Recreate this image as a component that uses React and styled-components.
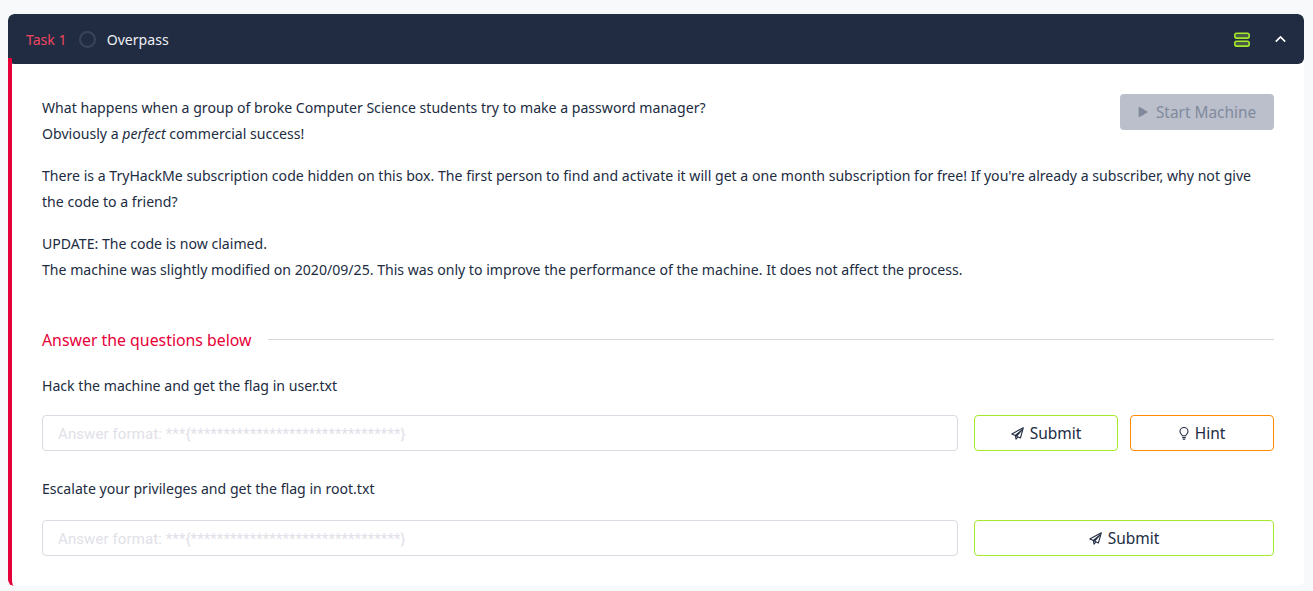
import React from "react";
import styled, { createGlobalStyle } from "styled-components";
import { FaPlay } from "react-icons/fa";

const Global = createGlobalStyle`
  html, body { margin: 0; padding: 0; background: #f8f9fb; }
  * { box-sizing: border-box; }
  body { font-family: "Noto Sans", sans-serif; color: #212c42; }
`;
const Page = styled.div`
  padding: 14px 9px 5px 8px;
`;
const Card = styled.section`
  background: #fff;
  border-radius: 6px;
  overflow: hidden;
`;
const Header = styled.header`
  height: 50px;
  background: #212c42;
  border-radius: 6px;
  display: flex;
  align-items: center;
  padding: 0 18px;
  font-size: 14.1px;
`;
const TaskLabel = styled.span`
  color: #f0465f;
`;
const Status = styled.span`
  width: 17px;
  height: 17px;
  border-radius: 50%;
  border: 2px solid #3a4458;
  margin: 0 11px 0 12px;
`;
const TaskTitle = styled.span`
  color: #eef0f4;
  flex: 1;
`;
const HeaderIcons = styled.div`
  display: flex;
  align-items: center;
  gap: 25px;
`;
const Body = styled.div`
  border-left: 4px solid #e60039;
  border-radius: 0 0 0 6px;
  margin-top: -6px;
  padding: 37px 30px 30px;
`;
const StartButton = styled.button`
  float: right;
  width: 154px;
  height: 36px;
  margin: -1px 0 0 16px;
  border: 0;
  border-radius: 4px;
  background: #babfcb;
  color: #818a9c;
  font: 15.4px "Noto Sans", sans-serif;
  display: flex;
  align-items: center;
  justify-content: center;
  gap: 8px;
`;
const Paragraph = styled.p`
  margin: 0 0 16px;
  font-size: 14.1px;
  line-height: 26px;
`;
const AnswerHeading = styled.div`
  display: flex;
  align-items: center;
  gap: 16px;
  margin-top: 44px;
  color: #e60039;
  font-size: 15.85px;
  line-height: 26px;
  &::after {
    content: "";
    flex: 1;
    height: 1px;
    background: #d5d7dc;
    position: relative;
    top: -1px;
  }
`;
const Question = styled.div`
  margin-top: ${(p) => p.$top}px;
  font-size: 14.1px;
  line-height: 26px;
`;
const AnswerRow = styled.div`
  display: flex;
  gap: 12px;
  margin-top: ${(p) => p.$top}px;
`;
const AnswerInput = styled.input`
  flex: 1;
  min-width: 0;
  height: 36px;
  margin-right: 4px;
  padding: 2px 15px 0;
  border: 1px solid #d9dbe3;
  border-radius: 4px;
  font: 15px "Roboto", sans-serif;
  letter-spacing: 0.1px;
  &::placeholder { color: #dfe1e8; opacity: 1; }
`;
const OutlineButton = styled.button`
  width: ${(p) => (p.$wide ? "300px" : "144px")};
  height: 36px;
  background: #fff;
  border: 1px solid ${(p) => p.$color};
  border-radius: 4px;
  color: #212c42;
  font: 15.5px "Noto Sans", sans-serif;
  display: flex;
  align-items: center;
  justify-content: center;
  gap: 6px;
`;

const ServerIcon = () => (
  <svg width="16" height="15" viewBox="0 0 16 15" stroke="#a3ea2a" strokeWidth="1.6" fill="#4b5c46">
    <rect x="0.8" y="1.3" width="14.4" height="4.8" rx="1.8" />
    <rect x="0.8" y="9.3" width="14.4" height="4.8" rx="1.8" />
  </svg>
);
const Chevron = () => (
  <svg width="11" height="8" viewBox="0 0 11 8" fill="none" stroke="#fff" strokeWidth="1.6">
    <path d="M.8 6.6l4.7-4.7 4.7 4.7" />
  </svg>
);
const PlaneIcon = () => (
  <svg width="13" height="13" viewBox="0 0 13 13" fill="none" stroke="#212c42" strokeWidth="1.1" strokeLinejoin="round">
    <path d="M12.3 0.8 0.8 7l3.6 1.5L11 3 5.6 9.2 9.4 11Z" />
    <path d="M4.4 8.5 5 12.2l1.9-2.2" />
  </svg>
);
const BulbIcon = () => (
  <svg width="10" height="13" viewBox="0 0 10 13" fill="none" stroke="#212c42" strokeWidth="1.1" strokeLinecap="round">
    <path d="M3.3 8.8C3 7.4 1 6.6 1 4.4a4 3.9 0 0 1 8 0c0 2.2-2 3-2.3 4.4Z" />
    <path d="M3.6 10.6h2.8M4.2 12.2h1.6" />
  </svg>
);

const placeholder = "Answer format: ***{********************************}";

export default function App() {
  return (
    <Page>
      <Global />
      <Card>
        <Header>
          <TaskLabel>Task 1</TaskLabel>
          <Status />
          <TaskTitle>Overpass</TaskTitle>
          <HeaderIcons>
            <ServerIcon />
            <Chevron />
          </HeaderIcons>
        </Header>
        <Body>
          <StartButton disabled>
            <FaPlay size={10} />
            Start Machine
          </StartButton>
          <Paragraph>
            What happens when a group of broke Computer Science students try to make a password manager?
            <br />
            Obviously a <em>perfect</em> commercial success!
          </Paragraph>
          <Paragraph>
            There is a TryHackMe subscription code hidden on this box. The first person to find and activate it will get a one month subscription for free! If you're already a subscriber, why not give the code to a friend?
          </Paragraph>
          <Paragraph>
            UPDATE: The code is now claimed.
            <br />
            The machine was slightly modified on 2020/09/25. This was only to improve the performance of the machine. It does not affect the process.
          </Paragraph>
          <AnswerHeading>Answer the questions below</AnswerHeading>
          <Question $top={20}>Hack the machine and get the flag in user.txt</Question>
          <AnswerRow $top={16}>
            <AnswerInput placeholder={placeholder} />
            <OutlineButton $color="#a3ea2a"><PlaneIcon />Submit</OutlineButton>
            <OutlineButton $color="#ff8a00"><BulbIcon />Hint</OutlineButton>
          </AnswerRow>
          <Question $top={25}>Escalate your privileges and get the flag in root.txt</Question>
          <AnswerRow $top={18}>
            <AnswerInput placeholder={placeholder} />
            <OutlineButton $wide $color="#a3ea2a"><PlaneIcon />Submit</OutlineButton>
          </AnswerRow>
        </Body>
      </Card>
    </Page>
  );
}
